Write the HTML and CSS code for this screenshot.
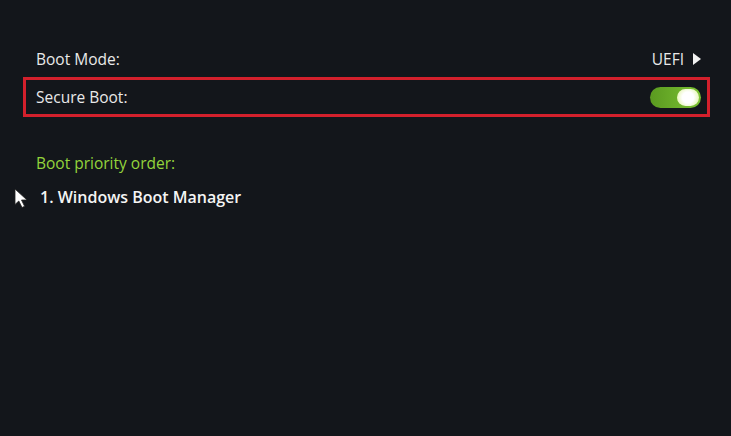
FILE: index.html
```html
<!DOCTYPE html>
<html lang="en">
<head>
  <meta charset="UTF-8" />
  <title>Boot</title>
  <link rel="stylesheet" href="styles.css">
</head>
<body>
  <div class="panel">
    <div class="row first">
      <span>Boot Mode:</span>
      <span class="value">UEFI <span class="arrow"></span></span>
    </div>
    <div class="row selected">
      <span>Secure Boot:</span>
      <span class="toggle on"><span class="knob"></span></span>
    </div>

    <div class="section-title">Boot priority order:</div>
    <div class="boot-item">
      <svg class="cursor" width="15" height="20" viewBox="0 0 15 20">
        <path d="M1 1 L1 16.5 L4.8 13 L8 19.5 L10.6 18.3 L7.5 12 L13 12 Z" fill="#fff" stroke="#222" stroke-width="0.8"/>
      </svg>
      <span>1. Windows Boot Manager</span>
    </div>
  </div>
</body>
</html>
```

FILE: styles.css
```css
body {
  margin: 0;
  background-color: #13161b;
  color: #e9e9e9;
  font-family: "Open Sans", "Noto Sans", sans-serif;
  font-size: 15.5px;
  height: 436px;
  overflow: hidden;
}
.panel {
  padding: 41px 21px 0 23px;
}
.row {
  display: flex;
  justify-content: space-between;
  align-items: center;
  height: 34px;
  padding: 0 6px 0 10px;
  border: 3px solid transparent;
}
.row.first {
  height: 30px;
}
.row.selected {
  border-color: #d3202c;
}
.value {
  display: flex;
  align-items: center;
  gap: 9px;
}
.arrow {
  width: 0;
  height: 0;
  border-top: 6px solid transparent;
  border-bottom: 6px solid transparent;
  border-left: 8px solid #f2f2f2;
}
.toggle {
  width: 51px;
  height: 21px;
  border-radius: 11px;
  background: linear-gradient(to right, #5a9a20, #7cc233);
  position: relative;
}
.knob {
  position: absolute;
  right: 2px;
  top: 2px;
  width: 22px;
  height: 17px;
  border-radius: 9px;
  background: radial-gradient(circle, #ffffff 40%, #e4f5ae 85%);
}
.section-title {
  color: #93d43b;
  margin: 35px 0 0 10px;
  padding-left: 3px;
}
.boot-item {
  display: flex;
  align-items: center;
  margin: 12px 0 0 -9px;
  font-size: 16px;
  font-weight: 600;
  color: #f4f4f4;
}
.cursor {
  margin-right: 11px;
  margin-top: 2px;
}
```
